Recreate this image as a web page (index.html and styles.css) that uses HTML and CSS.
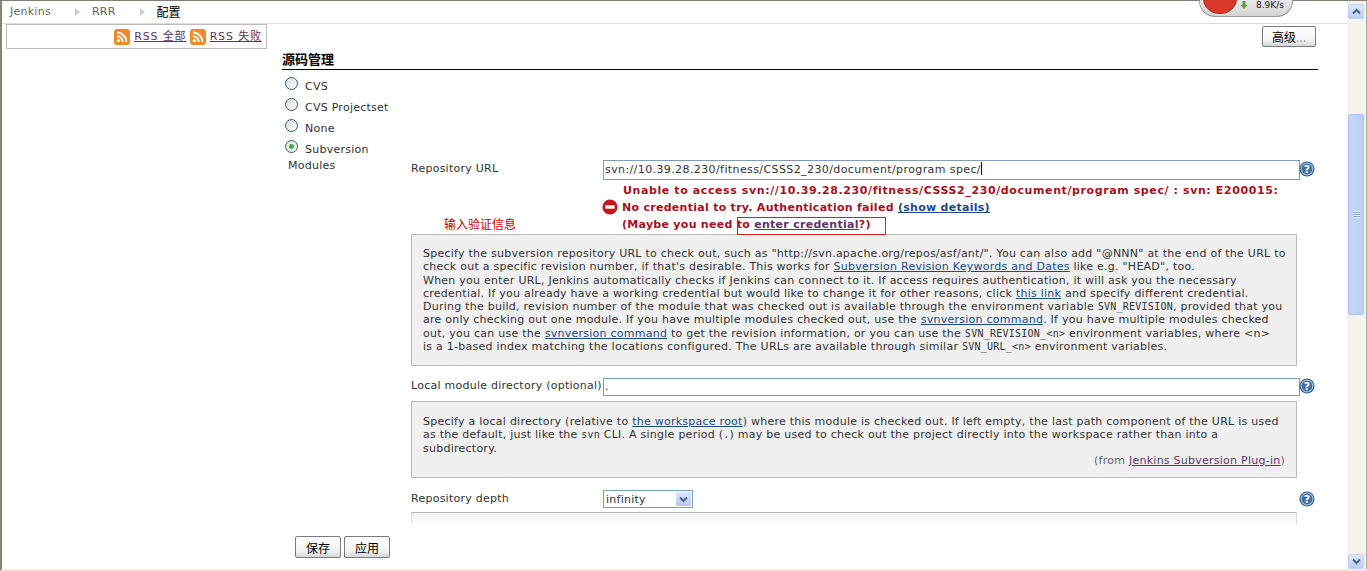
FILE: index.html
```html
<!DOCTYPE html>
<html lang="zh">
<head>
<meta charset="utf-8">
<title>RRR 配置 [Jenkins]</title>
<link rel="stylesheet" href="styles.css">
</head>
<body>
<div class="window">
  <div class="viewport">
    <nav class="crumbs">
      <a class="crumb">Jenkins</a><i class="arrow"></i>
      <a class="crumb">RRR</a><i class="arrow"></i>
      <a class="crumb current">配置</a>
    </nav>
    <div class="netmeter">
      <span class="netball"></span>
      <svg class="netarrow" width="8" height="8" viewBox="0 0 8 8"><path d="M2.5 0h3v4h2L4 8 .5 4h2z" fill="#5a9e3a"/></svg>
      <span class="netspeed">8.9K/s</span>
    </div>
    <div class="layout">
      <aside class="side">
        <div class="rssbox">
          <svg class="rss" viewBox="0 0 16 16"><rect width="16" height="16" rx="3" fill="#ee8a2c"/><circle cx="4.4" cy="11.6" r="1.7" fill="#fff"/><path d="M3 7.2a5.8 5.8 0 0 1 5.8 5.8M3 3.6A9.4 9.4 0 0 1 12.4 13" fill="none" stroke="#fff" stroke-width="2"/></svg>
          <a class="link rsslink">RSS 全部</a>
          <svg class="rss" viewBox="0 0 16 16"><rect width="16" height="16" rx="3" fill="#ee8a2c"/><circle cx="4.4" cy="11.6" r="1.7" fill="#fff"/><path d="M3 7.2a5.8 5.8 0 0 1 5.8 5.8M3 3.6A9.4 9.4 0 0 1 12.4 13" fill="none" stroke="#fff" stroke-width="2"/></svg>
          <a class="link rsslink">RSS 失败</a>
        </div>
      </aside>
      <main class="main">
        <div class="advrow"><button class="btn adv">高级<span class="dots">...</span></button></div>
        <h2 class="section">源码管理</h2>
        <div class="radios">
          <label class="radio"><i class="dot"></i>CVS</label>
          <label class="radio"><i class="dot"></i>CVS Projectset</label>
          <label class="radio"><i class="dot"></i>None</label>
          <label class="radio"><i class="dot on"></i>Subversion</label>
        </div>
        <div class="modules">
          <div class="modtitle">Modules</div>
          <div class="modbody">
            <div class="field">
              <label class="flabel">Repository URL</label>
              <div class="input url">svn://10.39.28.230/fitness/CSSS2_230/document/program spec/<i class="caret"></i></div>
              <svg class="help" viewBox="0 0 16 16"><circle cx="8" cy="8" r="7.6" fill="#2f5f95"/><circle cx="8" cy="8" r="6.4" fill="#b4c8e0"/><circle cx="8" cy="8" r="5.4" fill="#41709f"/><text x="8" y="12" text-anchor="middle" class="qmark">?</text></svg>
            </div>
            <div class="error">
              <svg class="erricon" viewBox="0 0 16 16"><circle cx="8" cy="8" r="7.6" fill="#c4161c"/><rect x="3.4" y="6.3" width="9.2" height="3.4" fill="#fff"/></svg>
              <div class="errtext"><span class="errwide">Unable to access svn://10.39.28.230/fitness/CSSS2_230/document/program spec/ : svn: E200015:</span><br>No credential to try. Authentication failed <a class="link details">(show details)</a><br>(Maybe you need to <a class="link details visited">enter credential</a>?)</div>
              <span class="note">输入验证信息</span>
              <span class="mark"></span>
            </div>
            <div class="helpbox first">Specify the subversion repository URL to check out, such as "http://svn.apache.org/repos/asf/ant/". You can also add "@NNN" at the end of the URL to<br>check out a specific revision number, if that's desirable. This works for <a class="link">Subversion Revision Keywords and Dates</a> like e.g. "HEAD", too.<br>When you enter URL, Jenkins automatically checks if Jenkins can connect to it. If access requires authentication, it will ask you the necessary<br>credential. If you already have a working credential but would like to change it for other reasons, click <a class="link">this link</a> and specify different credential.<br>During the build, revision number of the module that was checked out is available through the environment variable <code>SVN_REVISION</code>, provided that you<br>are only checking out one module. If you have multiple modules checked out, use the <a class="link">svnversion command</a>. If you have multiple modules checked<br>out, you can use the <a class="link">svnversion command</a> to get the revision information, or you can use the <code>SVN_REVISION_&lt;n&gt;</code> environment variables, where &lt;n&gt;<br>is a 1-based index matching the locations configured. The URLs are available through similar <code>SVN_URL_&lt;n&gt;</code> environment variables.</div>
            <div class="field local">
              <label class="flabel">Local module directory (optional)</label>
              <div class="input">.</div>
              <svg class="help" viewBox="0 0 16 16"><circle cx="8" cy="8" r="7.6" fill="#2f5f95"/><circle cx="8" cy="8" r="6.4" fill="#b4c8e0"/><circle cx="8" cy="8" r="5.4" fill="#41709f"/><text x="8" y="12" text-anchor="middle" class="qmark">?</text></svg>
            </div>
            <div class="helpbox second">Specify a local directory (relative to <a class="link">the workspace root</a>) where this module is checked out. If left empty, the last path component of the URL is used<br>as the default, just like the <code>svn</code> CLI. A single period (<code>.</code>) may be used to check out the project directly into the workspace rather than into a<br>subdirectory.
              <div class="from">(from <a class="link visited">Jenkins Subversion Plug-in</a>)</div>
            </div>
            <div class="field depth">
              <label class="flabel">Repository depth</label>
              <div class="fieldwide">
                <div class="select">infinity<span class="selbtn"><svg width="9" height="7" viewBox="0 0 9 7"><path d="M1 1.5l3.5 3.5L8 1.5" fill="none" stroke="#4d6185" stroke-width="2"/></svg></span></div>
              </div>
              <svg class="help" viewBox="0 0 16 16"><circle cx="8" cy="8" r="7.6" fill="#2f5f95"/><circle cx="8" cy="8" r="6.4" fill="#b4c8e0"/><circle cx="8" cy="8" r="5.4" fill="#41709f"/><text x="8" y="12" text-anchor="middle" class="qmark">?</text></svg>
            </div>
            <div class="helpbox third"></div>
          </div>
        </div>
      </main>
    </div>
    <div class="savebar">
      <button class="btn save">保存</button>
      <button class="btn save">应用</button>
    </div>
  </div>
  <div class="scrollbar">
    <span class="sbtn"><svg width="9" height="7" viewBox="0 0 9 7"><path d="M1 5.5L4.5 2 8 5.5" fill="none" stroke="#4d6185" stroke-width="2"/></svg></span>
    <div class="track"><div class="thumb"><i class="grip"></i></div></div>
    <span class="sbtn"><svg width="9" height="7" viewBox="0 0 9 7"><path d="M1 1.5l3.5 3.5L8 1.5" fill="none" stroke="#4d6185" stroke-width="2"/></svg></span>
  </div>
</div>
</body>
</html>
```
FILE: styles.css
```css
* { box-sizing: border-box; }
html, body { margin: 0; height: 571px; overflow: hidden; background: #fff; }
body { font-family: "DejaVu Sans", Verdana, "Noto Sans CJK SC", sans-serif; font-size: 11px; letter-spacing: .25px; color: #333; }
.window { display: flex; height: 571px; border-top: 1px solid #7f7f74; border-bottom: 2px solid #efe9dc; border-left: 2px solid #85857a; }
.viewport { position: relative; flex: 1; min-width: 0; display: flex; flex-direction: column; }

.crumbs { height: 23px; flex: none; display: flex; align-items: center; padding: 0 0 1px 8px; border-bottom: 1px solid #ddd; color: #666; }
.crumb { color: #666; }
.current { color: #000; font-size: 12px; letter-spacing: 0; font-family: "Noto Sans CJK SC", sans-serif; }
.arrow { width: 0; height: 0; margin: 1px 12px 0 24px; border-left: 5px solid #ccc; border-top: 4px solid transparent; border-bottom: 4px solid transparent; }

.netmeter { position: absolute; left: 1197px; top: -1px; width: 94px; height: 17px; border-radius: 0 0 16px 16px; background: linear-gradient(#e9e9e9, #d4d4d4); border: 1px solid #999; border-top: 0; }
.netball { position: absolute; left: 3px; top: -17px; width: 34px; height: 31px; border-radius: 50%; background: #d8392a; border: 1px solid #a8321f; }
.netarrow { position: absolute; left: 40px; top: 1px; }
.netspeed { position: absolute; left: 56px; top: 0; font-size: 9px; letter-spacing: 0; color: #222; }

.layout { flex: 1; min-height: 0; display: flex; overflow: hidden; }
.side { width: 265px; flex: none; padding: 0 0 0 4px; }
.rssbox { height: 25px; display: flex; align-items: center; justify-content: flex-end; gap: 4px; padding-right: 5px; border: 1px solid #bbb; }
.rss { width: 16px; height: 16px; }
.link { color: #204a87; text-decoration: underline; }
.rsslink { color: #5c3566; letter-spacing: .85px; margin-right: -.85px; margin-top: -3px; }

.main { width: 1036px; margin-left: 15px; flex: none; }
.advrow { display: flex; justify-content: flex-end; padding: 2px 2px 0 0; height: 31px; }
.btn { font-family: "Noto Sans CJK SC", sans-serif; font-size: 12px; letter-spacing: 0; color: #000; padding: 0; border: 1px solid #7b7b7b; border-radius: 2px; background: linear-gradient(#fff, #f3f3f3 70%, #d6d6d6); }
.adv { width: 54px; height: 21px; }
.dots { color: #999; }
.section { margin: 0; height: 15px; font-size: 13px; line-height: 7px; letter-spacing: 0; font-weight: bold; color: #000; font-family: "Noto Sans CJK SC", sans-serif; border-bottom: 1px solid #000; }

.radios { padding: 6px 0 0 3px; }
.radio { display: flex; align-items: center; height: 21px; color: #333; }
.dot { position: relative; top: -3px; width: 13px; height: 13px; margin-right: 7px; border-radius: 50%; border: 1px solid #33597f; background: linear-gradient(135deg, #dcdcd6, #fff); }
.dot.on::after { content: ""; position: absolute; left: 3px; top: 3px; width: 5px; height: 5px; border-radius: 50%; background: #3fae49; }

.modules { display: flex; margin-top: -2px; padding-left: 6px; }
.modtitle { width: 123px; flex: none; padding-top: 1px; color: #333; }
.modbody { width: 905px; flex: none; margin-top: 2px; }

.field { display: grid; grid-template-columns: 192px 697px 16px; align-items: start; }
.flabel { padding-top: 2px; color: #333; }
.input { height: 18px; padding: 0 1px; line-height: 15px; border: 1px solid #7f9db9; color: #333; white-space: nowrap; background: #fff; }
.url { height: 20px; line-height: 18px; letter-spacing: .4px; }
.caret { display: inline-block; width: 1px; height: 13px; background: #000; vertical-align: -2px; }
.help { width: 16px; height: 16px; margin-left: -1px; margin-top: 1px; }
.local .help { margin-top: 0; }
.qmark { font-size: 11px; font-weight: bold; fill: #fff; letter-spacing: 0; }

.error { position: relative; height: 54px; padding: 2px 0 0 191px; display: flex; align-items: flex-start; }
.erricon { width: 16px; height: 16px; margin-top: 17px; flex: none; }
.errtext { margin-left: 4px; font-weight: bold; line-height: 17px; letter-spacing: .28px; color: #a80f22; white-space: nowrap; }
.errwide { margin-left: 1px; letter-spacing: .6px; }
.details { color: #204a87; }
.visited { color: #5c3566; }
.note { position: absolute; left: 33px; top: 37px; color: #c00; font-size: 12px; letter-spacing: 0; line-height: 14px; font-family: "Noto Sans CJK SC", sans-serif; }
.mark { position: absolute; left: 326px; top: 37px; width: 149px; height: 18px; border: 1px solid #d21f2b; }

.helpbox { width: 886px; background: #f0f0f0; border: 1px solid #bbb; line-height: 13.3px; color: #333; padding: 12px 11px 0; white-space: nowrap; overflow: hidden; }
.helpbox code { font-family: "DejaVu Sans Mono", "Liberation Mono", monospace; font-size: 10px; }
.first { height: 132px; }
.second { height: 77px; padding-top: 13px; }
.third { height: 13px; background: linear-gradient(#f0f0f0, #fff); border-bottom: 0; border-left-color: #ddd; border-right-color: #ddd; }
.from { margin-top: -1px; text-align: right; color: #666; }
.local { margin-top: 12px; height: 23px; }
.local .flabel { padding-top: 1px; }
.depth { margin-top: 12px; height: 22px; }
.fieldwide { display: block; }
.select { position: relative; width: 90px; height: 18px; padding: 2px 0 0 2px; line-height: 14px; border: 1px solid #7f9db9; color: #333; }
.selbtn { position: absolute; right: 1px; top: 1px; width: 15px; height: 14px; background: linear-gradient(#dbe6fb, #b5c8f3); display: flex; align-items: center; justify-content: center; }

.savebar { position: relative; height: 45px; flex: none; background: #fff; display: flex; gap: 3px; padding: 12px 0 0 293px; }
.save { width: 46px; height: 22px; }

.scrollbar { width: 20px; flex: none; display: flex; flex-direction: column; padding: 3px 2px 0 1px; background: #f4f4ec; border-right: 1px solid #a9a99e; }
.sbtn { flex: none; height: 15px; border-radius: 2px; border: 1px solid #c3d3f5; background: linear-gradient(#dde7fb, #b9cdf5); display: flex; align-items: center; justify-content: center; }
.track { flex: 1; padding-top: 95px; }
.thumb { height: 201px; border-radius: 2px; border: 1px solid #aec4f3; background: linear-gradient(90deg, #c7d7f8, #bccff6); display: flex; align-items: center; justify-content: center; }
.grip { width: 7px; height: 7px; background: repeating-linear-gradient(#eef3fe 0 1px, #8ba6dc 1px 2px); }
```
